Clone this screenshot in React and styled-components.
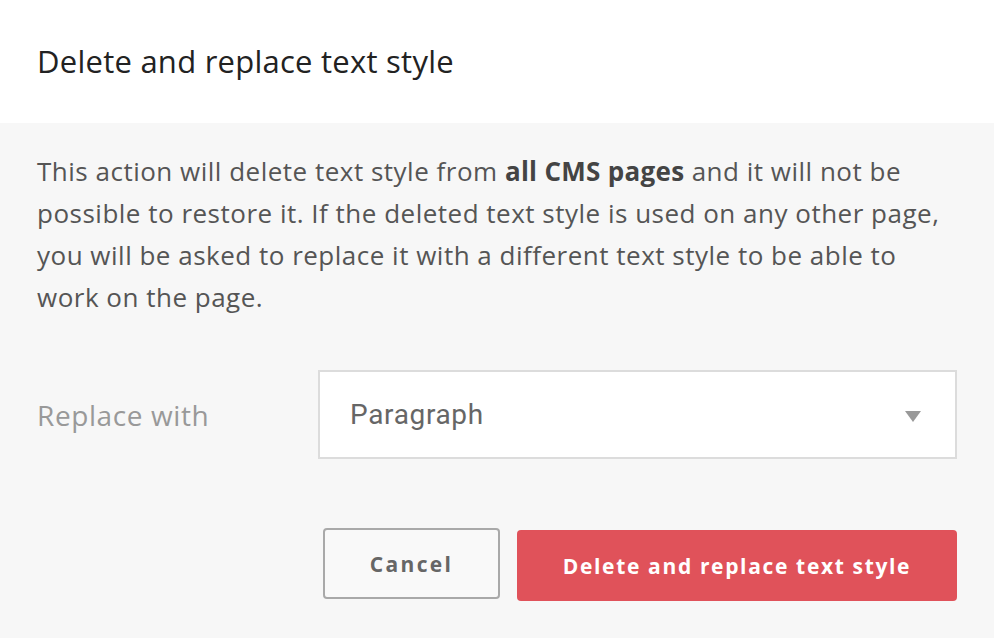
import React from "react";
import styled, { createGlobalStyle } from "styled-components";

const Global = createGlobalStyle`
  html, body { margin: 0; padding: 0; }
  body { background: #f7f7f7; font-family: "Open Sans", sans-serif; }
`;

const Page = styled.div`
  width: 994px;
  height: 638px;
  display: flex;
  flex-direction: column;
  background: #f7f7f7;
`;

const Header = styled.header`
  height: 123px;
  background: #fff;
  display: flex;
  align-items: center;
  padding: 0 37px;
  box-sizing: border-box;
`;

const Title = styled.h1`
  margin: 0 0 2px;
  font-size: 31px;
  font-weight: 400;
  color: #222;
  letter-spacing: 0.25px;
`;

const Body = styled.div`
  padding: 0 37px;
  display: flex;
  flex-direction: column;
`;

const Text = styled.p`
  margin: 27px 0 0;
  width: 940px;
  font-size: 26px;
  line-height: 42px;
  color: #555;
  letter-spacing: 0.5px;
  white-space: nowrap;
  b { font-weight: 700; color: #444; letter-spacing: 0.3px; }
`;

const Row = styled.div`
  margin-top: 52px;
  display: flex;
  align-items: center;
`;

const Label = styled.label`
  width: 281px;
  font-size: 28px;
  color: #999;
  letter-spacing: 0.6px;
`;

const Select = styled.div`
  width: 639px;
  height: 89px;
  box-sizing: border-box;
  border: 2px solid #dcdcdc;
  background: #fff;
  display: flex;
  align-items: center;
  justify-content: space-between;
  padding: 0 34px 0 30px;
  font-family: Roboto, sans-serif;
  font-size: 28px;
  letter-spacing: 0.65px;
  color: #666;
`;

const Arrow = styled.span`
  width: 0;
  height: 0;
  border-left: 8px solid transparent;
  border-right: 8px solid transparent;
  border-top: 11px solid #999;
  margin-top: 4px;
`;

const Actions = styled.div`
  margin-top: 69px;
  display: flex;
  justify-content: flex-end;
  align-items: flex-start;
  gap: 17px;
`;

const Button = styled.button`
  box-sizing: border-box;
  height: 71px;
  border-radius: 4px;
  font-family: "Open Sans", sans-serif;
  font-weight: 700;
  font-size: 21px;
  letter-spacing: ${p => (p.$primary ? "1.65px" : "2.3px")};
  cursor: pointer;
  ${p => p.$primary ? `
    width: 440px;
    background: #e0525a;
    border: none;
    color: #fff;
    margin-top: 2px;
  ` : `
    width: 177px;
    background: #f9f9f9;
    border: 2px solid #a9a9a9;
    color: #666;
  `}
`;

export default function App() {
  return (
    <Page>
      <Global />
      <Header>
        <Title>Delete and replace text style</Title>
      </Header>
      <Body>
        <Text>
          This action will delete text style from <b>all CMS pages</b> and it will not be<br />
          possible to restore it. If the deleted text style is used on any other page,<br />
          you will be asked to replace it with a different text style to be able to<br />
          work on the page.
        </Text>
        <Row>
          <Label>Replace with</Label>
          <Select>
            <span>Paragraph</span>
            <Arrow />
          </Select>
        </Row>
        <Actions>
          <Button>Cancel</Button>
          <Button $primary>Delete and replace text style</Button>
        </Actions>
      </Body>
    </Page>
  );
}
